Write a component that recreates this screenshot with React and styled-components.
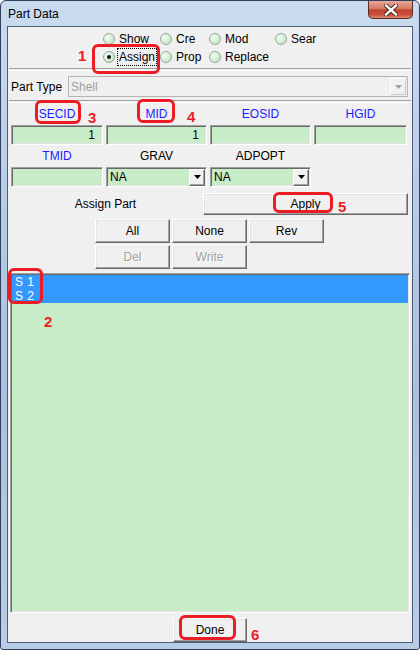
import React from "react";
import styled, { createGlobalStyle } from "styled-components";

const GlobalStyle = createGlobalStyle`
  html, body {
    margin: 0;
    padding: 0;
    background: #ffffff;
  }
  body {
    font-family: "Liberation Sans", Arial, sans-serif;
    font-size: 12px;
    color: #000;
  }
`;

const radios = [
  { label: "Show" },
  { label: "Cre" },
  { label: "Mod" },
  { label: "Sear" },
  { label: "Assign", checked: true },
  { label: "Prop" },
  { label: "Replace" },
];

const fields = [
  { label: "SECID", blue: true, kind: "text", value: "1" },
  { label: "MID", blue: true, kind: "text", value: "1" },
  { label: "EOSID", blue: true, kind: "text" },
  { label: "HGID", blue: true, kind: "text" },
  { label: "TMID", blue: true, kind: "text" },
  { label: "GRAV", kind: "combo", value: "NA" },
  { label: "ADPOPT", kind: "combo", value: "NA" },
];

const marks = [
  { x: 92, y: 44, w: 68, h: 30 },
  { x: 8, y: 268, w: 35, h: 36 },
  { x: 35, y: 100, w: 46, h: 24 },
  { x: 137, y: 99, w: 38, h: 24 },
  { x: 273, y: 192, w: 60, h: 21 },
  { x: 179, y: 615, w: 57, h: 25 },
];

const numbers = [
  { n: "1", x: 78, y: 48 },
  { n: "2", x: 44, y: 314 },
  { n: "3", x: 88, y: 110 },
  { n: "4", x: 187, y: 109 },
  { n: "5", x: 338, y: 199 },
  { n: "6", x: 251, y: 627 },
];

function Arrow({ color = "#000" }) {
  return (
    <svg width="7" height="4" viewBox="0 0 7 4">
      <path d="M0 0 H7 L3.5 4 Z" fill={color} />
    </svg>
  );
}

function App() {
  return (
    <>
      <GlobalStyle />
      <Window>
        <TitleBar>
          <Title>Part Data</Title>
          <CloseBtn>
            <svg width="14" height="12" viewBox="0 0 14 12">
              <path d="M2 1.5 L12 10.5 M12 1.5 L2 10.5" stroke="#3a1a18" strokeWidth="4.2" strokeLinecap="square" />
              <path d="M2 1.5 L12 10.5 M12 1.5 L2 10.5" stroke="#ffffff" strokeWidth="2.4" strokeLinecap="square" />
            </svg>
          </CloseBtn>
        </TitleBar>

        <Client>
          <RadioGrid>
            {radios.map((r) => (
              <RadioItem key={r.label}>
                <RadioDot $checked={r.checked} />
                {r.checked ? <Focused>{r.label}</Focused> : <span>{r.label}</span>}
              </RadioItem>
            ))}
          </RadioGrid>

          <Separator $top={2} />

          <PartTypeRow>
            <RowLabel>Part Type</RowLabel>
            <DisabledSelect>
              <span>Shell</span>
              <SelectButton $disabled>
                <Arrow color="#a0a0a0" />
              </SelectButton>
            </DisabledSelect>
          </PartTypeRow>

          <Separator $top={3} />

          <FieldGrid>
            {fields.map((f) => (
              <Field key={f.label}>
                <FieldLabel $blue={f.blue}>{f.label}</FieldLabel>
                {f.kind === "text" ? (
                  <TextBox>{f.value}</TextBox>
                ) : (
                  <Combo>
                    <span>{f.value}</span>
                    <SelectButton>
                      <Arrow />
                    </SelectButton>
                  </Combo>
                )}
              </Field>
            ))}
          </FieldGrid>

          <AssignRow>
            <AssignLabel>Assign Part</AssignLabel>
            <Button $w={205} $h={22}>Apply</Button>
          </AssignRow>

          <ButtonRow $top={4}>
            <Button>All</Button>
            <Button>None</Button>
            <Button>Rev</Button>
          </ButtonRow>
          <ButtonRow $top={2}>
            <Button disabled>Del</Button>
            <Button disabled>Write</Button>
          </ButtonRow>

          <ListBox>
            <ListItem>S 1</ListItem>
            <ListItem>S 2</ListItem>
          </ListBox>

          <Footer>
            <Button $w={74}>Done</Button>
          </Footer>
        </Client>

        <Overlay>
          {marks.map((m, i) => (
            <Mark key={i} $x={m.x} $y={m.y} $w={m.w} $h={m.h} />
          ))}
          {numbers.map((n) => (
            <Num key={n.n} $x={n.x} $y={n.y}>
              {n.n}
            </Num>
          ))}
        </Overlay>
      </Window>
    </>
  );
}

const Window = styled.div`
  position: relative;
  width: 420px;
  height: 650px;
  box-sizing: border-box;
  border: 1px solid #2f3f5c;
  border-radius: 6px 6px 3px 3px;
  background: linear-gradient(180deg, #c9dbef 0%, #b4cbe5 35%, #a9c1de 60%, #b8cde6 100%);
  padding: 0 6px 6px 6px;
  display: flex;
  flex-direction: column;
`;

const TitleBar = styled.div`
  height: 26px;
  display: flex;
  align-items: flex-start;
  justify-content: space-between;
`;

const Title = styled.div`
  padding: 6px 0 0 1px;
  line-height: 15px;
  color: #000;
`;

const CloseBtn = styled.div`
  width: 45px;
  height: 18px;
  box-sizing: border-box;
  border: 1px solid #5e2a26;
  border-top: none;
  border-radius: 0 0 5px 5px;
  background: linear-gradient(180deg, #e7a999 0%, #d57865 45%, #c0432d 52%, #c94e36 80%, #de8c70 100%);
  display: flex;
  align-items: center;
  justify-content: center;
`;

const Client = styled.div`
  flex: 1;
  border: 1px solid #4c5d78;
  background: #f0f0f0;
  display: flex;
  flex-direction: column;
`;

const RadioGrid = styled.div`
  display: grid;
  grid-template-columns: 57px 49px 66px auto;
  grid-auto-rows: 18px;
  margin-top: 3px;
  padding-left: 95px;
`;

const RadioItem = styled.label`
  display: flex;
  align-items: center;
  gap: 4px;
  white-space: nowrap;
`;

const RadioDot = styled.span`
  position: relative;
  flex: none;
  width: 12px;
  height: 12px;
  box-sizing: border-box;
  border-radius: 50%;
  border: 1px solid #9ea4a4;
  background: radial-gradient(circle at 35% 35%, #f5fff5 0%, #d3efd3 50%, #b9dfb9 100%);

  &::after {
    content: "";
    display: ${(p) => (p.$checked ? "block" : "none")};
    position: absolute;
    left: 3px;
    top: 3px;
    width: 4px;
    height: 4px;
    border-radius: 50%;
    background: #111;
  }
`;

const Focused = styled.span`
  outline: 1px dotted #000;
  outline-offset: 1px;
`;

const Separator = styled.div`
  margin-top: ${(p) => p.$top}px;
  height: 1px;
  border-top: 1px solid #a0a0a0;
  border-bottom: 1px solid #ffffff;
  margin-left: 1px;
  margin-right: 1px;
`;

const PartTypeRow = styled.div`
  margin-top: 5px;
  height: 21px;
  display: flex;
  align-items: center;
  padding: 0 4px 0 3px;
`;

const RowLabel = styled.div`
  width: 57px;
  flex: none;
`;

const DisabledSelect = styled.div`
  flex: 1;
  height: 21px;
  box-sizing: border-box;
  border: 1px solid #b5b5b5;
  background: #f0f0f0;
  color: #a0a0a0;
  display: flex;
  align-items: center;
  justify-content: space-between;
  padding: 0 1px 0 2px;
`;

const SelectButton = styled.div`
  width: 16px;
  height: 17px;
  box-sizing: border-box;
  background: #f0f0f0;
  border: 1px solid;
  border-color: ${(p) => (p.$disabled ? "#ffffff #c8c8c8 #c8c8c8 #ffffff" : "#ffffff #696969 #696969 #ffffff")};
  box-shadow: ${(p) => (p.$disabled ? "none" : "inset -1px -1px #a0a0a0")};
  display: flex;
  align-items: center;
  justify-content: center;
`;

const FieldGrid = styled.div`
  display: grid;
  grid-template-columns: 92px 101px 101px 93px;
  column-gap: 3px;
  row-gap: 2px;
  margin-top: 2px;
  padding-left: 3px;
`;

const Field = styled.div`
  display: flex;
  flex-direction: column;
  gap: 2px;
`;

const FieldLabel = styled.div`
  height: 18px;
  line-height: 18px;
  text-align: center;
  color: ${(p) => (p.$blue ? "#1c1cff" : "#000")};
`;

const Sunken = styled.div`
  height: 20px;
  box-sizing: border-box;
  border: 1px solid;
  border-color: #a0a0a0 #ffffff #ffffff #a0a0a0;
  box-shadow: inset 1px 1px #696969, inset -1px -1px #e3e3e3;
  background: #c8ecc8;
`;

const TextBox = styled(Sunken)`
  text-align: right;
  line-height: 18px;
  padding: 0 7px;
`;

const Combo = styled(Sunken)`
  display: flex;
  align-items: center;
  justify-content: space-between;
  padding: 0 1px 0 3px;
`;

const AssignRow = styled.div`
  margin-top: 6px;
  height: 22px;
  display: flex;
  align-items: center;
  gap: 3px;
  padding: 0 4px 0 3px;
`;

const AssignLabel = styled.div`
  flex: 1;
  text-align: center;
`;

const Button = styled.button`
  width: ${(p) => p.$w || 75}px;
  height: ${(p) => p.$h || 24}px;
  box-sizing: border-box;
  padding: 0;
  font: inherit;
  background: #f0f0f0;
  color: ${(p) => (p.disabled ? "#a0a0a0" : "#000")};
  text-shadow: ${(p) => (p.disabled ? "1px 1px #ffffff" : "none")};
  border: 1px solid;
  border-color: #ffffff #696969 #696969 #ffffff;
  box-shadow: inset -1px -1px #a0a0a0, inset 1px 1px #e3e3e3;
  flex: none;
`;

const ButtonRow = styled.div`
  margin-top: ${(p) => p.$top}px;
  display: flex;
  gap: 2px;
  padding-left: 87px;
`;

const ListBox = styled.div`
  margin: 4px 2px 0;
  height: 340px;
  box-sizing: border-box;
  border: 1px solid;
  border-color: #a0a0a0 #ffffff #ffffff #a0a0a0;
  box-shadow: inset 1px 1px #696969, inset -1px -1px #e3e3e3;
  background: #c8ecc8;
  padding: 1px 1px 0 1px;
`;

const ListItem = styled.div`
  height: 14px;
  line-height: 14px;
  background: #3399ff;
  color: #ffffff;
  padding-left: 3px;
  letter-spacing: 0.5px;
`;

const Footer = styled.div`
  margin-top: 5px;
  display: flex;
  justify-content: center;
`;

const Overlay = styled.div`
  position: absolute;
  left: -1px;
  top: -1px;
  width: 420px;
  height: 650px;
  pointer-events: none;
`;

const Mark = styled.div`
  position: absolute;
  left: ${(p) => p.$x}px;
  top: ${(p) => p.$y}px;
  width: ${(p) => p.$w}px;
  height: ${(p) => p.$h}px;
  box-sizing: border-box;
  border: 3px solid #ec1c24;
  border-radius: 6px;
`;

const Num = styled.div`
  position: absolute;
  left: ${(p) => p.$x}px;
  top: ${(p) => p.$y}px;
  font-family: "Liberation Sans", Arial, sans-serif;
  font-weight: bold;
  font-size: 15px;
  line-height: 15px;
  color: #ec1c24;
`;

export default App;
